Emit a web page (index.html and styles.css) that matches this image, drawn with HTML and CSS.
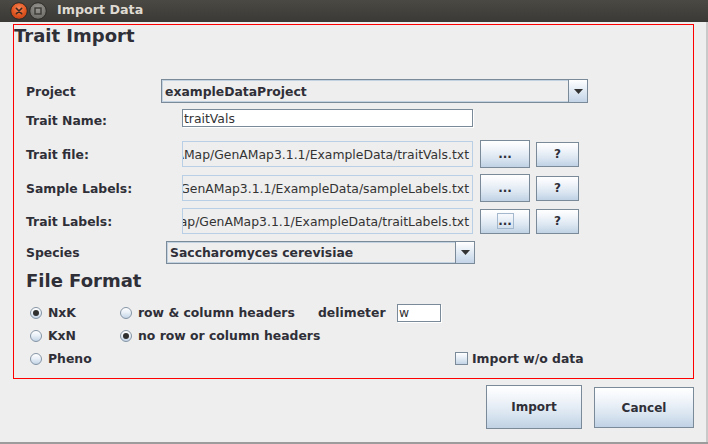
FILE: index.html
```html
<!DOCTYPE html>
<html>
<head>
<meta charset="utf-8">
<link rel="stylesheet" href="styles.css">
</head>
<body>
<header class="titlebar">
  <span class="wbtn">
    <svg width="18" height="18" viewBox="0 0 18 18">
      <defs>
        <radialGradient id="cg" cx="50%" cy="35%" r="65%">
          <stop offset="0" stop-color="#f8875a"/>
          <stop offset="0.6" stop-color="#e25822"/>
          <stop offset="1" stop-color="#c2421a"/>
        </radialGradient>
      </defs>
      <circle cx="9" cy="9" r="8.3" fill="url(#cg)" stroke="#2c2b27" stroke-width="1"/>
      <path d="M6.3 6.3 L11.7 11.7 M11.7 6.3 L6.3 11.7" stroke="#3a2a22" stroke-width="1.6" stroke-linecap="round"/>
    </svg>
  </span>
  <span class="wbtn">
    <svg width="18" height="18" viewBox="0 0 18 18">
      <defs>
        <radialGradient id="mg" cx="50%" cy="35%" r="65%">
          <stop offset="0" stop-color="#9a9994"/>
          <stop offset="1" stop-color="#6a6964"/>
        </radialGradient>
      </defs>
      <circle cx="9" cy="9" r="8.3" fill="url(#mg)" stroke="#2c2b27" stroke-width="1"/>
      <rect x="6" y="6" width="6" height="6" fill="none" stroke="#3b3a36" stroke-width="1.4"/>
    </svg>
  </span>
  <span class="title">Import Data</span>
</header>

<div class="main">
  <div class="content">
    <section class="panel">
      <h1 class="heading">Trait Import</h1>

      <div class="row row-project">
        <span class="lbl lbl-project">Project</span>
        <div class="combo combo-project">
          <span class="combo-value">exampleDataProject</span>
          <span class="combo-arrow"><svg width="9" height="5" viewBox="0 0 9 5"><polygon points="0,0 9,0 4.5,5" fill="#333"/></svg></span>
        </div>
      </div>

      <div class="row row-name">
        <span class="lbl lbl-low">Trait Name:</span>
        <span class="field">traitVals</span>
      </div>

      <div class="row row-file">
        <span class="lbl">Trait file:</span>
        <span class="path"><span class="path-text">AMap/GenAMap3.1.1/ExampleData/traitVals.txt</span></span>
        <span class="btn btn-browse">...</span>
        <span class="btn btn-help">?</span>
      </div>

      <div class="row row-sample">
        <span class="lbl">Sample Labels:</span>
        <span class="path"><span class="path-text">GenAMap3.1.1/ExampleData/sampleLabels.txt</span></span>
        <span class="btn btn-browse">...</span>
        <span class="btn btn-help">?</span>
      </div>

      <div class="row row-labels">
        <span class="lbl">Trait Labels:</span>
        <span class="path"><span class="path-text">ap/GenAMap3.1.1/ExampleData/traitLabels.txt</span></span>
        <span class="btn btn-browse btn-short"><span class="focus">...</span></span>
        <span class="btn btn-help">?</span>
      </div>

      <div class="row row-species">
        <span class="lbl lbl-species">Species</span>
        <div class="combo combo-species">
          <span class="combo-value">Saccharomyces cerevisiae</span>
          <span class="combo-arrow"><svg width="9" height="5" viewBox="0 0 9 5"><polygon points="0,0 9,0 4.5,5" fill="#333"/></svg></span>
        </div>
      </div>

      <h2 class="heading sub">File Format</h2>

      <div class="opts">
        <div class="opt-row">
          <span class="opt opt-a"><span class="radio on"></span>NxK</span>
          <span class="opt opt-b"><span class="radio"></span>row &amp; column headers</span>
          <span class="opt delim-lbl">delimeter</span>
          <span class="delim">w</span>
        </div>
        <div class="opt-row">
          <span class="opt opt-a"><span class="radio"></span>KxN</span>
          <span class="opt"><span class="radio on"></span>no row or column headers</span>
        </div>
        <div class="opt-row">
          <span class="opt opt-pheno"><span class="radio"></span>Pheno</span>
          <span class="opt"><span class="check"></span>Import w/o data</span>
        </div>
      </div>
    </section>

    <footer class="actions">
      <span class="btn btn-import">Import</span>
      <span class="btn btn-cancel">Cancel</span>
    </footer>
  </div>
  <div class="edge-right"></div>
</div>
<div class="edge-bottom"></div>
</body>
</html>
```

FILE: styles.css
```css
* { box-sizing: border-box; }
html, body { margin: 0; padding: 0; }
body {
  width: 708px;
  height: 444px;
  overflow: hidden;
  background: #eeeeee;
  font-family: "DejaVu Sans", sans-serif;
  color: #333333;
  display: flex;
  flex-direction: column;
}

.titlebar {
  flex: none;
  height: 22px;
  display: flex;
  align-items: center;
  padding-left: 10px;
  background: linear-gradient(#4a4944, #3a3935);
}
.wbtn { width: 18px; height: 18px; display: flex; margin-right: 1px; }
.title {
  margin-left: 9px;
  color: #dfdbd2;
  font-weight: bold;
  font-size: 12.7px;
  padding-bottom: 3px;
}

.main { flex: 1; display: flex; }
.content { width: 706px; display: flex; flex-direction: column; }
.edge-right { width: 2px; background: #c9c9c9; }
.edge-bottom { flex: none; height: 2px; background: #9c9c9c; }

.panel {
  margin: 2px 0 0 13px;
  width: 681px;
  height: 355px;
  border: 1px solid #ff0000;
  display: flex;
  flex-direction: column;
}

.heading {
  margin: 0;
  font-size: 18px;
  line-height: 21px;
  font-weight: bold;
  color: #2f2f38;
}
.heading.sub { margin: 6px 0 0 12px; }

.row { display: flex; align-items: center; padding-left: 12px; }
.row-project { margin-top: 33px; height: 24px; }
.row-name { margin-top: 6px; height: 18px; }
.row-file { margin-top: 13px; height: 28px; }
.row-sample { margin-top: 6px; height: 28px; }
.row-labels { margin-top: 6px; height: 26px; }
.row-species { margin-top: 7px; height: 23px; }

.lbl { flex: none; width: 156px; font-weight: bold; font-size: 12.4px; white-space: nowrap; color: #2f2f38; }
.lbl-project { width: 135px; }
.lbl-species { width: 140px; }
.lbl-low { padding-top: 5px; }

.combo {
  display: flex;
  height: 100%;
  border: 1px solid #7a8a99;
  background: #eeeeee;
}
.combo-project { width: 427px; }
.combo-species { width: 309px; }
.combo-value {
  flex: 1;
  display: flex;
  align-items: center;
  border: 1px solid #c3d2e1;
  border-right: none;
  padding-left: 2px;
  font-weight: bold;
  font-size: 12.4px;
  white-space: nowrap;
  overflow: hidden;
  color: #2f2f38;
}
.combo-arrow {
  flex: none;
  width: 19px;
  border-left: 1px solid #7a8a99;
  background: linear-gradient(#ffffff, #e6eef6 40%, #c3d4e7);
  display: flex;
  align-items: center;
  justify-content: center;
}

.field {
  width: 291px;
  height: 18px;
  border: 1px solid #7a8a99;
  background: #ffffff;
  box-shadow: 1px 1px 0 #ffffff;
  font-size: 12.4px;
  display: flex;
  align-items: center;
  padding-left: 1px;
}

.path {
  flex: none;
  width: 291px;
  height: 26px;
  border: 1px solid #b8cfe5;
  background: #eeeeee;
  display: flex;
  justify-content: flex-end;
  align-items: center;
  overflow: hidden;
  padding-right: 3px;
  font-size: 12.4px;
}
.path-text { flex: none; white-space: nowrap; }

.btn {
  flex: none;
  border: 1px solid #7a8a99;
  background: linear-gradient(#ffffff 0%, #f1f5fa 30%, #dbe6f1 65%, #c0d2e5 100%);
  font-weight: bold;
  font-size: 12px;
  color: #2f2f38;
  display: flex;
  align-items: center;
  justify-content: center;
}
.btn-browse { width: 50px; height: 28px; margin-left: 7px; }
.btn-short { height: 25px; }
.btn-help { width: 43px; height: 25px; margin-left: 6px; }
.focus {
  border: 1px solid #a3b8cc;
  width: 17px;
  height: 16px;
  line-height: 14px;
  text-align: center;
}

.opts { margin-top: 10px; padding-left: 16px; }
.opt-row { display: flex; align-items: center; height: 23px; }
.opt {
  flex: none;
  display: flex;
  align-items: center;
  font-weight: bold;
  font-size: 12.4px;
  white-space: nowrap;
  color: #2f2f38;
}
.opt-a { width: 90px; }
.opt-b { width: 198px; }
.opt-pheno { width: 425px; }
.delim-lbl { width: 79px; }
.radio {
  width: 12px;
  height: 12px;
  border-radius: 50%;
  border: 1px solid #8595a5;
  background: linear-gradient(#ffffff, #e9f0f7 45%, #c3d4e7);
  margin-right: 6px;
  display: flex;
  align-items: center;
  justify-content: center;
}
.radio.on::after {
  content: "";
  width: 6px;
  height: 6px;
  border-radius: 50%;
  background: #2f2f2f;
}
.delim {
  width: 44px;
  height: 18px;
  border: 1px solid #7a8a99;
  background: #ffffff;
  box-shadow: 1px 1px 0 #ffffff;
  font-size: 12.4px;
  display: flex;
  align-items: center;
  padding-left: 1px;
}
.check {
  width: 13px;
  height: 13px;
  border: 1px solid #7a8a99;
  background: linear-gradient(#ffffff, #e6eef6 45%, #c3d4e7);
  margin-right: 4px;
}

.actions {
  flex: none;
  height: 63px;
  display: flex;
  justify-content: flex-end;
  align-items: flex-start;
  gap: 12px;
  padding: 6px 12px 0 0;
}
.btn-import { width: 96px; height: 44px; }
.btn-cancel { width: 100px; height: 41px; margin-top: 2px; }
```
